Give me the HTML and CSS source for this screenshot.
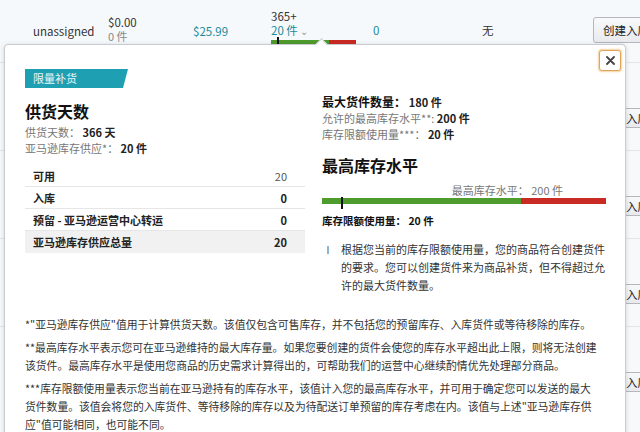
FILE: index.html
```html
<!DOCTYPE html>
<html lang="zh">
<head>
<meta charset="utf-8">
<link rel="stylesheet" href="styles.css">
</head>
<body>
<div class="toprow">
  <div class="cell c-sku">unassigned</div>
  <div class="cell c-fee"><div>$0.00</div><div class="sub">0 件</div></div>
  <div class="cell c-price">$25.99</div>
  <div class="cell c-days">
    <div>365+</div>
    <div class="teal">20 件 <span class="chev">⌄</span></div>
    <div class="minibar"><span class="mg"></span><span class="mr"></span><span class="mk"></span></div>
  </div>
  <div class="cell c-zero">0</div>
  <div class="cell c-none">无</div>
  <div class="cell c-btn"><span class="btn">创建入库计划</span></div>
</div>
<div class="spacer"></div>
<div class="bgrow"><span class="btn">创建入库计划</span></div>
<div class="bgrow"><span class="btn">创建入库计划</span></div>
<div class="bgrow"><span class="btn">创建入库计划</span></div>
<div class="bgrow"><span class="btn">创建入库计划</span></div>

<div class="popover">
  <button class="close" aria-label="关闭"><svg width="9" height="9" viewBox="0 0 9 9"><path d="M1 1L8 8M8 1L1 8" stroke="#444" stroke-width="1.8" stroke-linecap="round"/></svg></button>
  <div class="cols">
    <div class="left">
      <div class="badge">限量补货</div>
      <div class="h">供货天数</div>
      <div class="kv first">供货天数： <b>366 天</b></div>
      <div class="kv">亚马逊库存供应*： <b>20 件</b></div>
      <div class="table">
        <div class="tr"><span>可用</span><span class="plain">20</span></div>
        <div class="tr"><span>入库</span><span>0</span></div>
        <div class="tr"><span>预留 - 亚马逊运营中心转运</span><span>0</span></div>
        <div class="tr total"><span>亚马逊库存供应总量</span><span>20</span></div>
      </div>
    </div>
    <div class="right">
      <div class="r1">最大货件数量： <b>180 件</b></div>
      <div class="kv">允许的最高库存水平**: <b>200 件</b></div>
      <div class="kv">库存限额使用量***： <b>20 件</b></div>
      <div class="h h2">最高库存水平</div>
      <div class="barlabel">最高库存水平： 200 件</div>
      <div class="bar"><span class="bg"></span><span class="br"></span><span class="bm"></span></div>
      <div class="used">库存限额使用量： 20 件</div>
      <div class="info"><span class="ic"></span><p>根据您当前的库存限额使用量，您的商品符合创建货件的要求。您可以创建货件来为商品补货，但不得超过允许的最大货件数量。</p></div>
    </div>
  </div>
  <div class="notes">
    <p>*"亚马逊库存供应"值用于计算供货天数。该值仅包含可售库存，并不包括您的预留库存、入库货件或等待移除的库存。</p>
    <p>**最高库存水平表示您可在亚马逊维持的最大库存量。如果您要创建的货件会使您的库存水平超出此上限，则将无法创建该货件。最高库存水平是使用您商品的历史需求计算得出的，可帮助我们的运营中心继续酌情优先处理部分商品。</p>
    <p>***库存限额使用量表示您当前在亚马逊持有的库存水平，该值计入您的最高库存水平，并可用于确定您可以发送的最大<br>货件数量。该值会将您的入库货件、等待移除的库存以及为待配送订单预留的库存考虑在内。该值与上述"亚马逊库存供应"值可能相同，也可能不同。</p>
  </div>
</div>
</body>
</html>
```

FILE: styles.css
```css
* { box-sizing: border-box; margin: 0; padding: 0; }
html, body { width: 640px; height: 432px; overflow: hidden; }
body {
  position: relative;
  background: #f7f9fa;
  font-family: "Noto Sans CJK SC", "Noto Sans", sans-serif;
  color: #222;
}

/* background table */
.toprow {
  height: 44px;
  display: grid;
  grid-template-columns: 75px 85px 78px 102px 109px 111px 1fr;
  padding-left: 33px;
  font-size: 11.5px;
  color: #333;
  background: #f6f9fb;
}
.cell { line-height: 14px; }
.c-sku { padding-top: 24px; }
.c-fee { padding-top: 16px; line-height: 13px; }
.c-fee .sub { color: #888; font-size: 11px; line-height: 14px; }
.c-price { padding-top: 24px; color: #1a8a9c; }
.c-days { padding-top: 9px; }
.c-days .teal { color: #1a8a9c; }
.chev { color: #999; font-size: 10px; line-height: 10px; }
.minibar { position: relative; display: flex; width: 85px; height: 4px; margin-top: 3px; }
.mg { width: 58px; background: #4e9b2e; }
.mr { flex: 1; background: #c92a24; }
.mk { position: absolute; left: 6px; top: -3px; width: 2px; height: 9px; background: #111; }
.c-zero { padding-top: 23px; color: #1a8a9c; }
.c-none { padding-top: 23px; }
.c-btn { padding-top: 17px; }
.c-btn .btn { height: 26px; line-height: 24px; }

.btn {
  display: inline-block;
  white-space: nowrap;
  height: 20px;
  line-height: 18px;
  padding: 0 9px;
  font-size: 11.5px;
  color: #222;
  border: 1px solid #b4b8bd;
  border-radius: 3px;
  background: linear-gradient(#f8f9fa, #e8eaed);
}
.spacer { height: 18px; }
.bgrow {
  height: 88px;
  padding: 41px 0 0 593px;
  border-top: 1px solid #e4e7ea;
}

/* popover */
.popover {
  position: absolute;
  left: 4px;
  top: 44px;
  width: 622px;
  height: 410px;
  background: #fff;
  border: 1px solid #c9ccd0;
  border-radius: 4px;
  box-shadow: 0 1px 5px rgba(0, 0, 0, 0.16);
  padding: 24px 19px 0 20px;
}
.popover::before {
  content: "";
  position: absolute;
  top: -5px;
  left: 312px;
  width: 8px;
  height: 8px;
  background: #fff;
  border-left: 1px solid #c9ccd0;
  border-top: 1px solid #c9ccd0;
  transform: rotate(45deg);
}
.close {
  position: absolute;
  top: 5px;
  right: 4px;
  width: 22px;
  height: 21px;
  display: flex;
  align-items: center;
  justify-content: center;
  background: #fff;
  border: 1px solid #e0a55c;
  border-radius: 3px;
  box-shadow: 0 0 0 1px #f7dcb6, 0 0 3px #eeb068;
}

.cols {
  display: grid;
  grid-template-columns: 280px 284px;
  column-gap: 17px;
}
.badge {
  width: 103px;
  height: 19px;
  line-height: 19px;
  padding-left: 8px;
  font-size: 11px;
  color: #e8f7fa;
  background: #1ea0b2;
  clip-path: polygon(0 0, 100% 0, calc(100% - 5px) 100%, 0 100%);
}
.h {
  margin-top: 12px;
  font-size: 16px;
  font-weight: 700;
  line-height: 22px;
  color: #111;
}
.kv {
  font-size: 11px;
  line-height: 16px;
  color: #777;
}
.kv b, .r1 b { color: #222; font-weight: 700; }
.kv.first { margin-top: 2px; }

.table { margin-top: 9px; }
.tr {
  display: flex;
  justify-content: space-between;
  align-items: center;
  height: 22px;
  padding: 0 18px 0 8px;
  border-bottom: 1px solid #e6e6e6;
  font-size: 11px;
  font-weight: 700;
  color: #222;
}
.tr .plain { font-weight: 400; color: #555; }
.tr.total { background: #f1f1f1; border-bottom: none; }

.right { padding-top: 25px; }
.r1 { font-size: 12px; font-weight: 700; line-height: 16px; color: #111; }
.r1 b { font-size: 11px; }
.h2 { margin-top: 12px; }
.barlabel {
  margin-top: 6px;
  padding-right: 43px;
  text-align: right;
  font-size: 11px;
  line-height: 16px;
  color: #777;
}
.bar { position: relative; display: flex; height: 6px; }
.bg { width: 199px; background: #4e9b2e; }
.br { flex: 1; background: #c92a24; }
.bm { position: absolute; left: 19px; top: -1px; width: 2px; height: 12px; background: #111; }
.used {
  margin-top: 9px;
  font-size: 10.5px;
  font-weight: 700;
  line-height: 16px;
  color: #111;
}
.info {
  display: flex;
  margin-top: 11px;
  font-size: 11px;
  line-height: 18px;
  color: #333;
}
.ic {
  flex: none;
  width: 2px;
  height: 8px;
  margin: 6px 12px 0 5px;
  background: #8fb3d3;
}
.info p { width: 267px; }

.notes {
  margin-top: 21px;
  width: 578px;
  font-size: 10.8px;
  line-height: 18px;
  color: #333;
}
.notes p + p { margin-top: 5px; }
```
